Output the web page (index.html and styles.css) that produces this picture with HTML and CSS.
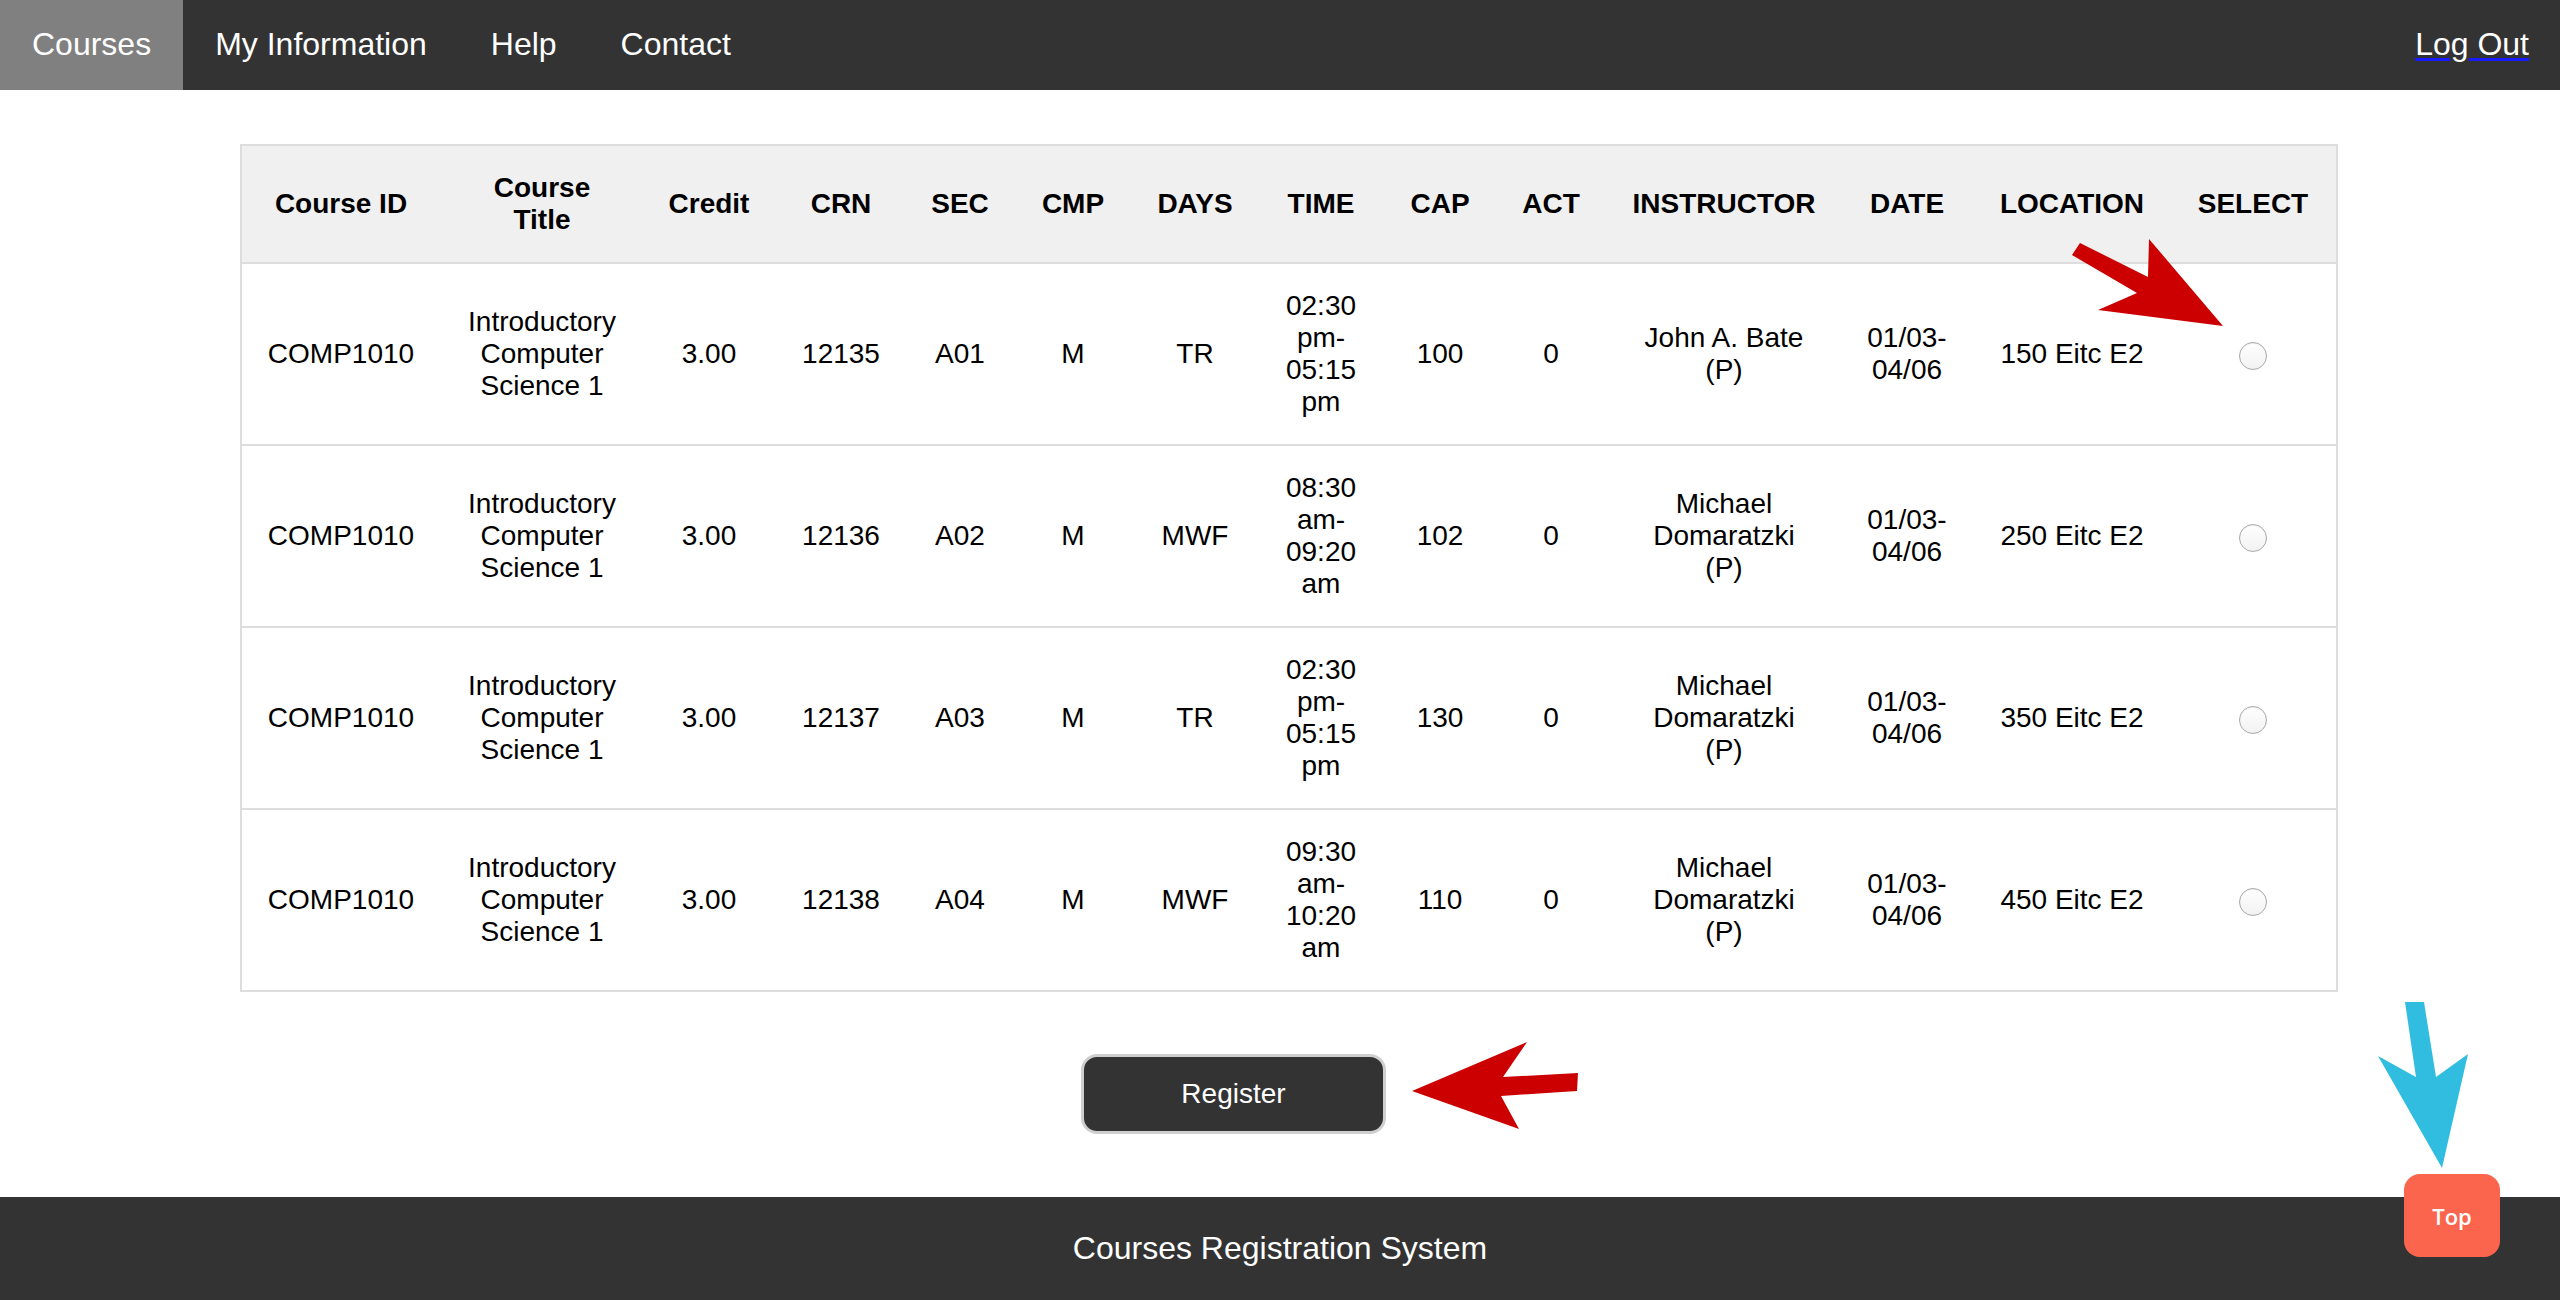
FILE: index.html
```html
<!DOCTYPE html>
<html lang="en">
<head>
<meta charset="utf-8">
<title>Courses Registration System</title>
<link rel="stylesheet" href="styles.css">
</head>
<body>
<nav class="topnav">
  <a class="nav-link active" href="#">Courses</a>
  <a class="nav-link" href="#">My Information</a>
  <a class="nav-link" href="#">Help</a>
  <a class="nav-link" href="#">Contact</a>
  <a class="nav-link logout" href="#">Log Out</a>
</nav>

<main class="content">
  <table class="courses">
    <thead>
      <tr>
        <th class="c-id">Course ID</th>
        <th class="c-title">Course Title</th>
        <th class="c-credit">Credit</th>
        <th class="c-crn">CRN</th>
        <th class="c-sec">SEC</th>
        <th class="c-cmp">CMP</th>
        <th class="c-days">DAYS</th>
        <th class="c-time">TIME</th>
        <th class="c-cap">CAP</th>
        <th class="c-act">ACT</th>
        <th class="c-instr">INSTRUCTOR</th>
        <th class="c-date">DATE</th>
        <th class="c-loc">LOCATION</th>
        <th class="c-sel">SELECT</th>
      </tr>
    </thead>
    <tbody>
      <tr>
        <td>COMP1010</td>
        <td class="title">Introductory Computer Science 1</td>
        <td>3.00</td>
        <td>12135</td>
        <td>A01</td>
        <td>M</td>
        <td>TR</td>
        <td>02:30 pm-05:15 pm</td>
        <td>100</td>
        <td>0</td>
        <td class="instr">John A. Bate (P)</td>
        <td>01/03-04/06</td>
        <td>150 Eitc E2</td>
        <td><input class="radio" type="radio" name="sel"></td>
      </tr>
      <tr>
        <td>COMP1010</td>
        <td class="title">Introductory Computer Science 1</td>
        <td>3.00</td>
        <td>12136</td>
        <td>A02</td>
        <td>M</td>
        <td>MWF</td>
        <td>08:30 am-09:20 am</td>
        <td>102</td>
        <td>0</td>
        <td class="instr">Michael Domaratzki (P)</td>
        <td>01/03-04/06</td>
        <td>250 Eitc E2</td>
        <td><input class="radio" type="radio" name="sel"></td>
      </tr>
      <tr>
        <td>COMP1010</td>
        <td class="title">Introductory Computer Science 1</td>
        <td>3.00</td>
        <td>12137</td>
        <td>A03</td>
        <td>M</td>
        <td>TR</td>
        <td>02:30 pm-05:15 pm</td>
        <td>130</td>
        <td>0</td>
        <td class="instr">Michael Domaratzki (P)</td>
        <td>01/03-04/06</td>
        <td>350 Eitc E2</td>
        <td><input class="radio" type="radio" name="sel"></td>
      </tr>
      <tr>
        <td>COMP1010</td>
        <td class="title">Introductory Computer Science 1</td>
        <td>3.00</td>
        <td>12138</td>
        <td>A04</td>
        <td>M</td>
        <td>MWF</td>
        <td>09:30 am-10:20 am</td>
        <td>110</td>
        <td>0</td>
        <td class="instr">Michael Domaratzki (P)</td>
        <td>01/03-04/06</td>
        <td>450 Eitc E2</td>
        <td><input class="radio" type="radio" name="sel"></td>
      </tr>
    </tbody>
  </table>

  <div class="actions">
    <button class="register" type="button">Register</button>
  </div>
</main>

<footer class="footer">Courses Registration System</footer>

<button class="top-btn" type="button">Top</button>

<svg class="annotations" width="2560" height="1300" viewBox="0 0 2560 1300" aria-hidden="true">
  <polygon fill="#cc0000" points="2080,243 2148,277 2149,239 2223,326 2098,310 2137,293 2072,255"/>
  <polygon fill="#cc0000" points="1412,1091 1527,1042 1503,1077 1578,1073 1577,1091 1501,1096 1519,1129"/>
  <polygon fill="#31bddf" points="2405,1002 2424,1002 2436,1077 2468,1054 2442,1168 2378,1056 2416,1077"/>
</svg>
</body>
</html>
```

FILE: styles.css
```css
* {
  box-sizing: border-box;
}

html, body {
  margin: 0;
  padding: 0;
}

body {
  font-family: "Liberation Sans", Arial, Helvetica, sans-serif;
  color: #000;
  background: #fff;
  position: relative;
  min-height: 1300px;
}

/* ---------- top navigation ---------- */
.topnav {
  display: flex;
  height: 90px;
  background: #333333;
}

.nav-link {
  display: block;
  padding: 0 32px;
  line-height: 88px;
  font-size: 32px;
  color: #ffffff;
  text-decoration: none;
}

.nav-link.active {
  background: #808080;
}

.nav-link.logout {
  margin-left: auto;
  padding: 0 31px 0 32px;
  text-decoration: underline;
  text-decoration-color: #1a1aff;
  text-decoration-thickness: 3px;
  text-underline-offset: 3px;
}

/* ---------- content ---------- */
.content {
  padding-top: 54px;
}

.courses {
  width: 2094px;
  margin-left: 240px;
  border-collapse: collapse;
  table-layout: fixed;
  border: 2px solid #dddddd;
  font-size: 28px;
  line-height: 32px;
}

.courses th,
.courses td {
  text-align: center;
  vertical-align: middle;
  padding: 26px 20px;
}

.courses th {
  background: #f0f0f0;
  font-weight: bold;
}

.courses tr {
  border-bottom: 2px solid #dddddd;
}

.c-id { width: 199px; }
.c-title { width: 204px; padding-left: 22px !important; padding-right: 22px !important; }
.c-credit { width: 130px; }
.c-crn { width: 134px; }
.c-sec { width: 104px; }
.c-cmp { width: 122px; }
.c-days { width: 122px; }
.c-time { width: 130px; }
.c-cap { width: 108px; }
.c-act { width: 114px; }
.c-instr { width: 232px; }
.c-date { width: 134px; }
.c-loc { width: 196px; }
.c-sel { width: 167px; }

.courses td.title {
  padding-left: 22px;
  padding-right: 22px;
}

.courses td.instr {
  padding-left: 26px;
  padding-right: 26px;
}

.radio {
  -webkit-appearance: none;
  appearance: none;
  display: inline-block;
  width: 28px;
  height: 28px;
  margin: 0;
  vertical-align: middle;
  border-radius: 50%;
  border: 1px solid #a9a9a9;
  background: linear-gradient(#ffffff, #f2f2f2);
  box-shadow: inset 0 1px 1px rgba(0, 0, 0, 0.06);
}

/* ---------- register ---------- */
.actions {
  display: flex;
  justify-content: center;
  padding: 62px 93px 63px 0;
}

.register {
  width: 305px;
  height: 80px;
  background: #333333;
  color: #ffffff;
  border: 3px solid #cfcfcf;
  border-radius: 16px;
  font-family: "Liberation Sans", Arial, Helvetica, sans-serif;
  font-size: 28px;
  padding: 0;
}

/* ---------- footer ---------- */
.footer {
  height: 103px;
  background: #333333;
  color: #ffffff;
  font-size: 32px;
  line-height: 103px;
  text-align: center;
}

.top-btn {
  position: absolute;
  left: 2404px;
  top: 1174px;
  width: 96px;
  height: 83px;
  border: none;
  border-radius: 16px;
  background: #fc654d;
  color: #ffffff;
  font-family: "Open Sans", "Liberation Sans", sans-serif;
  font-size: 22px;
  font-weight: 600;
  padding: 0;
}

.annotations {
  position: absolute;
  left: 0;
  top: 0;
  pointer-events: none;
}
```
